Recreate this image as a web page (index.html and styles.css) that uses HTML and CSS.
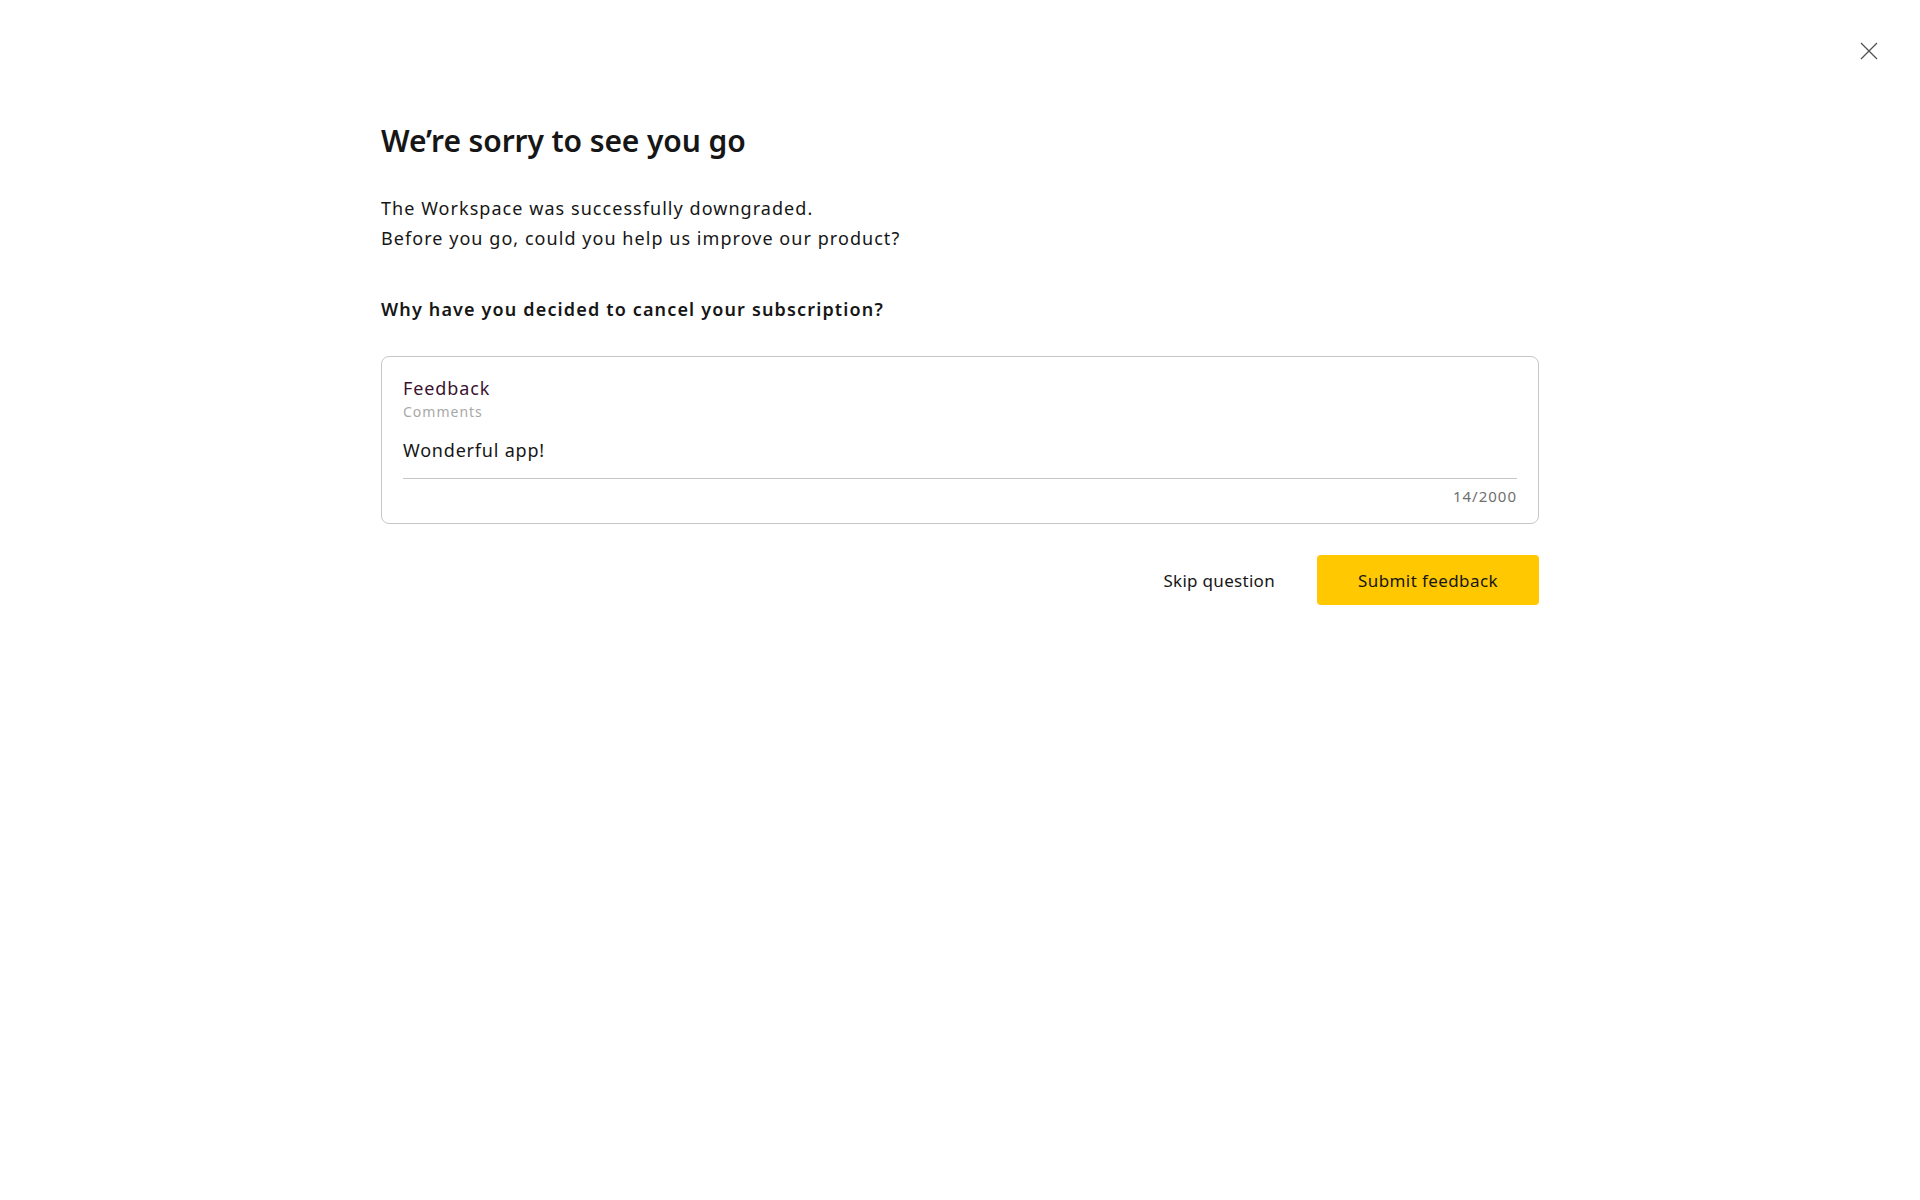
FILE: index.html
```html
<!DOCTYPE html>
<html lang="en">

<head>
  <meta charset="UTF-8">
  <title>We're sorry to see you go</title>
  <link rel="stylesheet" href="styles.css">
</head>

<body>
  <header class="topbar">
    <button class="close" aria-label="Close">
      <svg width="18" height="18" viewBox="0 0 18 18">
        <path d="M1 1 L17 17 M17 1 L1 17" stroke="#525252" stroke-width="1.3" fill="none" />
      </svg>
    </button>
  </header>

  <main class="content">
    <h1 class="title">We’re sorry to see you go</h1>

    <p class="intro">
      The Workspace was successfully downgraded.<br>
      Before you go, could you help us improve our product?
    </p>

    <h2 class="question">Why have you decided to cancel your subscription?</h2>

    <div class="card">
      <label class="field-label" for="comments">Feedback</label>
      <div class="field-hint">Comments</div>
      <div class="field-input" id="comments">Wonderful app!</div>
      <div class="counter">14/2000</div>
    </div>

    <div class="actions">
      <button class="btn-ghost">Skip question</button>
      <button class="btn-primary">Submit feedback</button>
    </div>
  </main>
</body>

</html>
```

FILE: styles.css
```css
body {
  margin: 0;
  background: #ffffff;
  color: #161616;
  font-family: 'Noto Sans', 'Liberation Sans', sans-serif;
}

button {
  font-family: inherit;
  cursor: pointer;
}

.topbar {
  display: flex;
  justify-content: flex-end;
  padding: 42px 42px 0;
}

.close {
  border: none;
  background: none;
  padding: 0;
  width: 18px;
  height: 18px;
  display: flex;
}

.content {
  max-width: 1158px;
  margin: 0 auto;
}

.title {
  margin: 62px 0 0;
  font-size: 30px;
  line-height: 38px;
  font-weight: 600;
  letter-spacing: -0.1px;
}

.intro {
  margin: 33px 0 0;
  font-size: 18px;
  line-height: 30px;
  letter-spacing: 1.05px;
}

.question {
  margin: 44px 0 0;
  font-size: 18px;
  line-height: 24px;
  font-weight: 600;
  letter-spacing: 1.15px;
}

/* Feedback card */
.card {
  margin-top: 35px;
  border: 1px solid #c6c6c6;
  border-radius: 8px;
  padding: 19px 21px 18px;
  display: flex;
  flex-direction: column;
}

.field-label {
  font-size: 18px;
  line-height: 24px;
  letter-spacing: 0.9px;
  color: #3a1330;
}

.field-hint {
  margin-top: 3px;
  font-size: 14px;
  line-height: 18px;
  letter-spacing: 1px;
  color: #a8a8a8;
}

.field-input {
  margin-top: 17px;
  padding-bottom: 16px;
  border-bottom: 1px solid #c6c6c6;
  font-size: 18px;
  line-height: 24px;
  letter-spacing: 0.8px;
}

.counter {
  margin-top: 8px;
  align-self: flex-end;
  font-size: 15px;
  line-height: 18px;
  letter-spacing: 1px;
  color: #6f6f6f;
}

/* Actions */
.actions {
  margin-top: 31px;
  display: flex;
  justify-content: flex-end;
  align-items: center;
  gap: 26px;
}

.btn-ghost {
  border: none;
  background: none;
  padding: 0 16px;
  height: 50px;
  font-size: 17px;
  letter-spacing: 0.3px;
  color: #161616;
}

.btn-primary {
  border: none;
  background: #ffc800;
  border-radius: 4px;
  width: 222px;
  height: 50px;
  font-size: 17px;
  letter-spacing: 0.4px;
  color: #161616;
}
```
